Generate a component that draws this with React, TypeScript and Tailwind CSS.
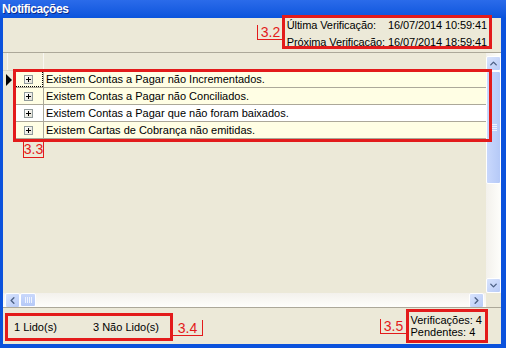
import { ChevronUp, ChevronDown, ChevronLeft, ChevronRight } from 'lucide-react'

const ROWS = [
  { text: 'Existem Contas a Pagar não Incrementados.', bg: 'bg-[#FFFEE4]', current: true },
  { text: 'Existem Contas a Pagar não Conciliados.', bg: 'bg-[#FFFEE4]' },
  { text: 'Existem Contas a Pagar que não foram baixados.', bg: 'bg-white' },
  { text: 'Existem Cartas de Cobrança não emitidas.', bg: 'bg-[#FFFEE4]' },
]

function PlusBox() {
  return (
    <span className="relative w-[9px] h-[9px] border border-[#919B9C] bg-gradient-to-br from-white to-[#E3E1D6] flex items-center justify-center">
      <span className="absolute w-[5px] h-px bg-black" />
      <span className="absolute w-px h-[5px] bg-black" />
    </span>
  )
}

function ScrollButton({ children }: { children: React.ReactNode }) {
  return (
    <div className="w-[15px] h-[15px] rounded-[2px] border border-white bg-gradient-to-br from-[#D9E4FD] to-[#B8CBF7] flex items-center justify-center text-[#4D6185]">
      {children}
    </div>
  )
}

function Note({ label, className }: { label: string; className: string }) {
  return (
    <div className={`absolute text-[14px] leading-none text-[#E31B1B] flex items-center justify-center border-[#E31B1B] ${className}`}>
      {label}
    </div>
  )
}

export default function App() {
  return (
    <div
      className="relative w-[506px] h-[348px] bg-[#0B52DC] flex flex-col overflow-hidden"
      style={{ fontFamily: '"Liberation Sans", Arial, sans-serif' }}
    >
      {/* Title bar */}
      <div className="h-[18px] flex items-center pl-[2px] bg-gradient-to-b from-[#2A6BEA] to-[#0A54DC]">
        <span className="text-white font-bold text-[12px] tracking-[-0.4px] leading-none [text-shadow:1px_1px_0_#0A2A8A]">
          Notificações
        </span>
      </div>

      <div className="flex-1 ml-[3px] mr-[5px] mb-[4px] bg-[#ECE9D8] flex flex-col">
        {/* Top info */}
        <div className="h-[34px] flex justify-end pr-[14px]">
          <div className="grid grid-cols-[auto_auto] gap-x-[3px] text-[11px] leading-[14px] text-black whitespace-nowrap tracking-[-0.1px]">
            <span>Última Verificação:</span>
            <span>16/07/2014 10:59:41</span>
            <span>Próxima Verificação:</span>
            <span>16/07/2014 18:59:41</span>
          </div>
        </div>

        {/* Grid */}
        <div className="h-[255px] border-t border-[#ACA899] flex flex-col">
          <div className="flex-1 flex min-h-0">
            <div className="flex-1 flex flex-col">
              <div className="h-[18px] flex border-b border-[#D8D4C4]">
                <div className="w-[4px]" />
                <div className="w-[36px] border-l border-[#F8F7F2]" />
                <div className="flex-1 border-l border-[#F8F7F2]" />
              </div>
              {ROWS.map((r) => (
                <div key={r.text} className="h-[17px] flex">
                  <div className="w-[10px] flex items-center justify-center">
                    {r.current && (
                      <span className="w-0 h-0 border-y-[6px] border-y-transparent border-l-[6px] border-l-black ml-[2px]" />
                    )}
                  </div>
                  <div className={`flex-1 flex border-b border-[#ACA899] ${r.bg}`}>
                    <div className="w-[31px] flex border-r border-[#ACA899]">
                      <div
                        className={`flex-1 flex items-center justify-center ${
                          r.current ? 'border border-dotted border-black' : ''
                        }`}
                      >
                        <PlusBox />
                      </div>
                    </div>
                    <div className="flex-1 flex items-center pl-[2px] text-[11px] text-black whitespace-nowrap">{r.text}</div>
                  </div>
                </div>
              ))}
            </div>

            {/* Vertical scrollbar */}
            <div className="w-[15px] flex flex-col bg-gradient-to-r from-[#F3F1EC] to-[#FEFEFB] pt-[3px]">
              <ScrollButton>
                <ChevronUp size={11} strokeWidth={3} />
              </ScrollButton>
              <div className="h-[113px] rounded-[2px] border border-white bg-gradient-to-r from-[#C9D8FC] to-[#B5C9F7] flex items-center justify-center">
                <div className="flex flex-col gap-[1px]">
                  <span className="w-[7px] h-px bg-[#EEF3FE]" />
                  <span className="w-[7px] h-px bg-[#EEF3FE]" />
                  <span className="w-[7px] h-px bg-[#EEF3FE]" />
                  <span className="w-[7px] h-px bg-[#EEF3FE]" />
                </div>
              </div>
              <div className="flex-1" />
              <ScrollButton>
                <ChevronDown size={11} strokeWidth={3} />
              </ScrollButton>
            </div>
          </div>

          {/* Horizontal scrollbar */}
          <div className="h-[14px] flex">
            <div className="flex-1 flex items-center pl-[2px] pr-[2px] bg-gradient-to-b from-[#F3F1EC] to-[#FEFEFB]">
              <ScrollButton>
                <ChevronLeft size={11} strokeWidth={3} />
              </ScrollButton>
              <div className="w-[16px] h-[14px] rounded-[2px] border border-white bg-gradient-to-b from-[#C9D8FC] to-[#B5C9F7] flex items-center justify-center gap-[1px]">
                <span className="w-px h-[6px] bg-[#EEF3FE]" />
                <span className="w-px h-[6px] bg-[#EEF3FE]" />
                <span className="w-px h-[6px] bg-[#EEF3FE]" />
                <span className="w-px h-[6px] bg-[#EEF3FE]" />
              </div>
              <div className="flex-1" />
              <ScrollButton>
                <ChevronRight size={11} strokeWidth={3} />
              </ScrollButton>
            </div>
            <div className="w-[15px] bg-[#ECE9D8]" />
          </div>
        </div>

        {/* Footer */}
        <div className="flex-1 border-t border-[#ACA899] flex items-center justify-between pl-[11px] pr-[19px] text-[11px] text-black">
          <div className="flex pt-[2px]">
            <span className="w-[79px]">1 Lido(s)</span>
            <span>3 Não Lido(s)</span>
          </div>
          <div className="flex flex-col leading-[12px]">
            <span>Verificações: 4</span>
            <span>Pendentes: 4</span>
          </div>
        </div>
      </div>

      {/* Annotation boxes */}
      <div className="absolute left-[282px] top-[15px] w-[210px] h-[34px] border-[3px] border-[#E31B1B]" />
      <div className="absolute left-[13px] top-[69px] w-[479px] h-[73px] border-[3px] border-[#E31B1B]" />
      <div className="absolute left-[5px] top-[313px] w-[168px] h-[28px] border-[3px] border-[#E31B1B]" />
      <div className="absolute left-[406px] top-[309px] w-[82px] h-[34px] border-[3px] border-[#E31B1B]" />

      <Note label="3.2" className="left-[257px] top-[25px] w-[26px] h-[15px] border-l border-b" />
      <Note label="3.3" className="left-[23px] top-[141px] w-[21px] h-[17px] border-l border-r border-b" />
      <Note label="3.4" className="left-[173px] top-[320px] w-[30px] h-[16px] border-r border-b" />
      <Note label="3.5" className="left-[380px] top-[319px] w-[26px] h-[15px] border-l border-b" />
    </div>
  )
}
